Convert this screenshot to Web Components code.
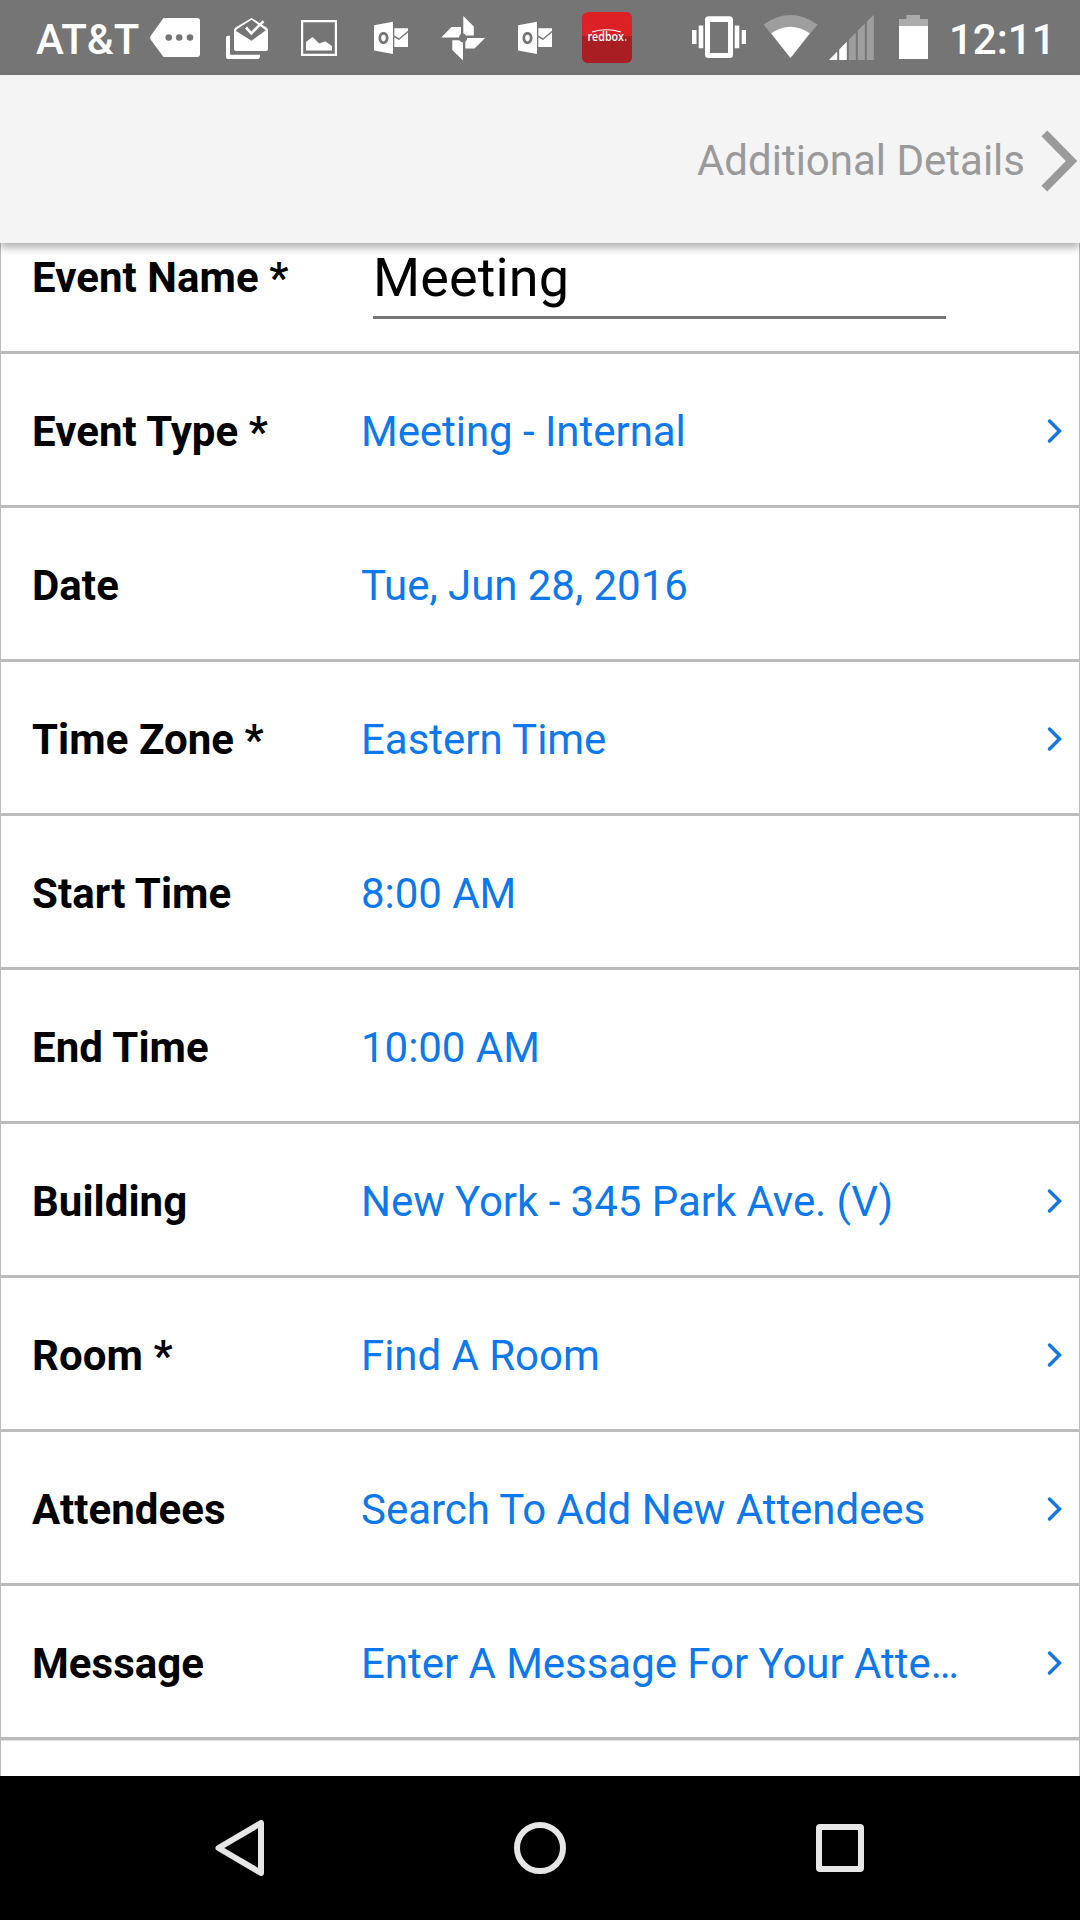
<!DOCTYPE html>
<html lang="en">
<head>
<meta charset="utf-8">
<title>Event</title>
<style>
html,body{margin:0;padding:0;background:#fff}
body{font-family:Roboto,"Liberation Sans",sans-serif;width:1080px;height:1920px;overflow:hidden}
</style>
</head>
<body>
<event-app></event-app>
<script>
const define = (name, html, after) => customElements.define(name, class extends HTMLElement {
  constructor() {
    super();
    const t = document.createElement('template');
    t.innerHTML = html;
    this.attachShadow({ mode: 'open' }).append(t.content.cloneNode(true));
  }
  connectedCallback() { if (after) after(this, this.shadowRoot); }
});

/* Each icon: [left, width, drawing]; drawings use status bar coordinates. */
const outlook = x => `<g transform="translate(${x} 0)"><path fill-rule="evenodd" d="M0 25.2 19 21.8V54L0 50.6ZM9.5 32c-3.100 0-5 2.500-5 6s1.900 6 5 6 5-2.500 5-6-1.900-6-5-6Zm0 2.800c1.500 0 2.300 1.200 2.300 3.200s-.8 3.200-2.300 3.200-2.300-1.200-2.300-3.200.8-3.200 2.300-3.200Z"/><path d="M20.300 28.300H34V30.800L25 38.200 20.300 35.500ZM20.300 37.300 25 40 34 32.600V47H20.300Z"/></g>`;
const ICONS = {
  more: [150, 50, '<path d="M163.500 18H197q3 0 3 3V54q0 3-3 3H163.500L150.600 39.500Q149.600 37.800 150.600 36Z"/><g fill="#757575"><circle cx="168.700" cy="37.500" r="3.300"/><circle cx="179.200" cy="37.500" r="3.300"/><circle cx="190" cy="37.500" r="3.300"/></g>'],
  inbox: [226, 42, '<path d="M226 37.500q0-1.700 2-1.700h2V54.700H260q0 4.300-2 4.300H228q-2 0-2-2Z"/><path d="M251.500 18 266.500 27.500Q268 28.500 268 30V49q0 2-2 2H236q-2 0-2-2V30q0-1.500 1.500-2.500Z"/><path fill="#757575" d="M251.500 19.700 265.800 30.300 251.500 40.800 236 31 236.500 29.500Z"/><path fill="none" stroke="#fff" stroke-width="2.600" d="M246 27.500 251.300 33.300 263.500 21.200"/>'],
  picture: [301, 36, '<path fill-rule="evenodd" d="M301 20h36V56H301ZM303.200 22.200V53.800H334.800V22.200Z"/><path d="M306 50.500V42L312.500 37 319.300 43.600 325.200 41.300 332 46V50.500Z"/>'],
  outlookA: [374, 34, outlook(374)],
  photos: [441, 44, '<path d="M463.300 16 473.800 26.500V35.600H466Q465.400 33.800 463.300 33.200Z"/><path d="M441.200 37.500 451.500 27H461V33.600Q459.200 35 459 37.500Z"/><path d="M452.300 40.200H459.300Q460.500 42 463 42.400V60.500L452.300 50Z"/><path d="M467.200 38H485L474.500 48.600H465.300V42Q467 40.600 467.200 38Z"/>'],
  outlookB: [518, 34, outlook(518)],
  redbox: [582, 50, '<defs><clipPath id="c"><rect x="582" y="12" width="50" height="51" rx="6"/></clipPath></defs><g clip-path="url(#c)"><path fill="#dd1f26" d="M582 12h50v51h-50Z"/><path fill="#a91e22" d="M582 36h50v27h-50Z"/></g><path fill="none" stroke="#fff" stroke-width="1.200" d="M592 32Q606.500 27.500 621 32"/><text x="587.500" y="41" font-family="Open Sans" font-weight="600" font-size="12" textLength="36.500" lengthAdjust="spacingAndGlyphs">redbox</text><circle cx="625.700" cy="40" r=".8"/>'],
  vibrate: [692, 54, '<path d="M692 30h4.500V44H692ZM698.700 25.500h4.600V48.300h-4.600ZM734.700 25.500h4.600V48.300h-4.600ZM741.700 30h4.300V44h-4.300Z"/><path fill-rule="evenodd" d="M708.500 16.300H729.500q3.500 0 3.500 3.500V54.500q0 3.500-3.500 3.500H708.500q-3.500 0-3.500-3.500V19.800q0-3.500 3.500-3.500ZM710 22V53H728V22Z"/>'],
  wifi: [763, 55, '<path opacity=".3" d="M763.500 24.500Q790.500 5.500 817.500 24.500L790.500 58Z"/><path d="M771.200 33.300Q790.500 20.300 809.800 33.300L790.500 58Z"/>'],
  signal: [829, 45, '<path d="M829 60 837.200 51.500V60ZM839.200 49.500 846.800 41.700V60H839.200Z"/><path opacity=".3" d="M848.800 39.700 855.800 32.700V60H848.800ZM857.800 30.500 864.800 23.500V60H857.800ZM866.800 21.500 873.800 14.800V60H866.800Z"/>'],
  battery: [899, 29, '<path opacity=".4" d="M899 26V19H906.500V15H920V19H928V26Z"/><path d="M899 26h29V59H899Z"/>']
};
define('status-icon', `<style>:host{display:block;flex:none;height:75px}svg{display:block;fill:#fff;overflow:visible}</style>`, (el, root) => {
  const [x, w, art] = ICONS[el.getAttribute('name')];
  const holder = document.createElement('template');
  holder.innerHTML = `<svg width="${w}" height="75" viewBox="${x} 0 ${w} 75">${art}</svg>`;
  root.append(holder.content);
});

define('status-bar', `<style>
:host{display:flex;height:75px;background:#757575;color:#fff;font-weight:500;font-size:42px;line-height:79px;box-sizing:border-box;padding:0 0 0 36px}
.group{display:flex}.carrier{width:114px;white-space:nowrap}
.right{margin-left:60px}
.clock{margin-left:21px;white-space:nowrap}
.left status-icon+status-icon{margin-left:33px}
.left status-icon[name=inbox]{margin-left:26px!important}
.left status-icon[name=outlookA]{margin-left:37px!important}
.left status-icon[name=redbox]{margin-left:30px!important}
.right status-icon+status-icon{margin-left:17px}
.right status-icon[name=signal]{margin-left:11px!important}
.right status-icon[name=battery]{margin-left:25px!important}
</style>
<div class="group left"><span class="carrier">AT&amp;T</span><status-icon name="more"></status-icon><status-icon name="inbox"></status-icon><status-icon name="picture"></status-icon><status-icon name="outlookA"></status-icon><status-icon name="photos"></status-icon><status-icon name="outlookB"></status-icon><status-icon name="redbox"></status-icon></div>
<div class="group right"><status-icon name="vibrate"></status-icon><status-icon name="wifi"></status-icon><status-icon name="signal"></status-icon><status-icon name="battery"></status-icon><span class="clock">12:11</span></div>`);

define('top-bar', `<style>
:host{display:flex;position:relative;z-index:1;height:168px;background:#f4f4f4;color:#9a9a9a;font-size:42px;align-items:center;justify-content:flex-end;box-shadow:0 5px 8px rgba(0,0,0,.3);line-height:50px}
span{padding-top:4px}svg{display:block;margin:4px 2px 0 16px}
</style><span><slot></slot></span><svg width="37" height="62" viewBox="0 0 37 62" fill="none" stroke="#9a9a9a" stroke-width="8.200" stroke-linejoin="miter"><path stroke-linecap="square" d="M6.200 6.200 30.500 31 6.200 55.800"/></svg>`);

define('form-row', `<style>
:host{display:flex;height:154px;box-sizing:border-box;align-items:center;padding:1px 17px 0 31px;font-size:42px;line-height:50px;background:linear-gradient(transparent 151px,#bbb 151px) #fff;box-shadow:0 1px 0 #e0e0e0;position:relative}
.label{width:329px;flex:none;font-weight:700;color:#000;letter-spacing:.05px}
.value{flex:1;color:#0c78ee;white-space:nowrap;letter-spacing:-.04px}
svg{display:none;margin-bottom:2px}
:host([link]) svg{display:block}
</style><div class="label"><slot name="label"></slot></div><div class="value"><slot></slot></div><svg width="15" height="26" viewBox="0 0 15 26" fill="none" stroke="#1377dc" stroke-width="3.500" stroke-linecap="round"><path d="M2.500 3 12.500 13 2.500 23"/></svg>`);

define('text-field', `<style>
:host{display:flex;box-sizing:border-box;width:573px;height:71px;margin:11px 0 0 12px;border-bottom:3px solid #757575;color:#000;font-size:54px;line-height:60px;letter-spacing:.1px}
</style><slot></slot>`);

define('event-form', `<style>
:host{display:flex;flex-direction:column;height:1533px;box-sizing:border-box;overflow:hidden;justify-content:flex-start;border:solid #bbb;border-width:0 1px}
.scroll{margin-top:-43px}
</style><div class="scroll"><slot></slot></div>`);

define('nav-bar', `<style>
:host{display:flex;height:144px;background:#000;align-items:center;justify-content:center;gap:240px}
svg{display:block;fill:none;stroke:#e6e6e6;stroke-width:6;stroke-linejoin:round}
</style>
<svg width="60" height="60"><path d="M8.500 30 51 5V55Z"/></svg>
<svg width="60" height="60"><circle cx="30" cy="30" r="23"/></svg>
<svg width="60" height="60"><rect x="9" y="9" width="42" height="42" rx="1"/></svg>`);

define('event-app', `<style>:host{display:flex;flex-direction:column;height:1920px;overflow:hidden}</style>
<status-bar></status-bar>
<top-bar>Additional Details</top-bar>
<event-form>
<form-row><span slot="label">Event Name *</span><text-field>Meeting</text-field></form-row>
<form-row link><span slot="label">Event Type *</span>Meeting - Internal</form-row>
<form-row><span slot="label">Date</span>Tue, Jun 28, 2016</form-row>
<form-row link><span slot="label">Time Zone *</span>Eastern Time</form-row>
<form-row><span slot="label">Start Time</span>8:00 AM</form-row>
<form-row><span slot="label">End Time</span>10:00 AM</form-row>
<form-row link><span slot="label">Building</span>New York - 345 Park Ave. (V)</form-row>
<form-row link><span slot="label">Room *</span>Find A Room</form-row>
<form-row link><span slot="label">Attendees</span>Search To Add New Attendees</form-row>
<form-row link><span slot="label">Message</span>Enter A Message For Your Atte…</form-row>
</event-form>
<nav-bar></nav-bar>`);
</script>
</body>
</html>
